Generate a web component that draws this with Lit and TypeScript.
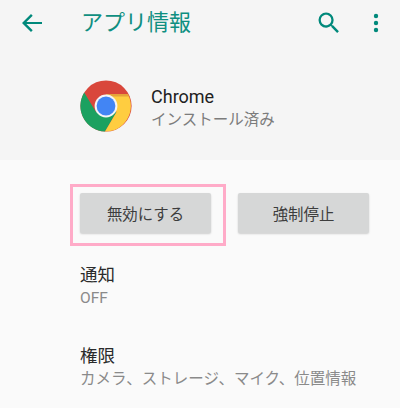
import { LitElement, html, css } from "lit";
import { customElement } from "lit/decorators.js";

@customElement("app-root")
export class AppRoot extends LitElement {
  static styles = css`
    :host { display: block; width: 400px; height: 408px; overflow: hidden; background: #fafafa;
      font-family: Roboto, "Noto Sans CJK JP", sans-serif; }
    .top { background: #f5f5f5; height: 160px; box-sizing: border-box; }
    .bar { height: 46px; display: flex; align-items: center; }
    .back { width: 24px; height: 24px; margin-left: 20px; }
    .title { margin-left: 37px; font-size: 22px; color: #0f8f81; line-height: 46px; flex: 1; white-space: nowrap; }
    .search { width: 28px; height: 28px; margin-right: 21px; }
    .more { width: 24px; height: 24px; margin-right: 12px; }
    .app { display: flex; align-items: flex-start; padding: 34px 0 0 80px; }
    .logo { width: 52px; height: 52px; }
    .names { margin-left: 19px; padding-top: 5px; }
    .name { font-size: 18px; line-height: 24px; color: #212121; }
    .status { font-size: 15.5px; line-height: 23px; color: #7c7c7c; white-space: nowrap; }
    .actions { display: flex; align-items: flex-start; padding: 24px 0 0 70px; }
    .hl { border: 3px solid #ffabc8; padding: 6px 12px 10px 7px; }
    .btn { width: 131px; height: 40px; border-radius: 2px; background: #d6d7d7; color: #3d3d3d;
      box-shadow: 0 1px 2px rgba(0,0,0,.18); font-size: 15.4px; display: flex; align-items: center; justify-content: center; white-space: nowrap; }
    .second { margin: 9px 0 0 12px; }
    .rows { padding-left: 80px; }
    .row { white-space: nowrap; }
    .row-title { font-size: 17.5px; line-height: 24px; color: #2b2b2b; }
    .row-sub { font-size: 15.5px; line-height: 22px; color: #8a8a8a; }
    .n { margin-top: 17px; }
    .p { margin-top: 35px; }
  `;

  render() {
    return html`
      <div class="top">
        <div class="bar">
          <svg class="back" viewBox="0 0 24 24"><path fill="#00897b" d="M22 11H6.4l6.3-6.3L11 3 2 12l9 9 1.7-1.7L6.4 13H22z"/></svg>
          <div class="title">アプリ情報</div>
          <svg class="search" viewBox="0 0 24 24"><path fill="#00897b" d="M15.5 14h-.79l-.28-.27A6.47 6.47 0 0 0 16 9.5 6.5 6.5 0 1 0 9.5 16c1.61 0 3.09-.59 4.23-1.57l.27.28v.79l5 4.99L20.49 19l-4.99-5zm-6 0C7.01 14 5 11.99 5 9.5S7.01 5 9.5 5 14 7.01 14 9.5 11.99 14 9.5 14z"/></svg>
          <svg class="more" viewBox="0 0 24 24"><g fill="#00897b"><circle cx="12" cy="5" r="2.2"/><circle cx="12" cy="12" r="2.2"/><circle cx="12" cy="19" r="2.2"/></g></svg>
        </div>
        <div class="app">
          <svg class="logo" viewBox="0 0 52 52">
            <circle cx="26" cy="26" r="25.6" fill="#d9473b"/>
            <path fill="#1ba160" d="M4.2 12.6A25.6 25.6 0 0 0 25 51.6L36.5 32 26 26 16 32z"/>
            <path fill="#ffcd40" d="M26 14H47.9A25.6 25.6 0 0 1 25 51.6L36.5 32z"/>
            <path fill="#b5562f" opacity=".35" d="M26 14H47.9l1.2 2.5H28z"/>
            <circle cx="26" cy="26" r="11.4" fill="#f5f5f5"/>
            <circle cx="26" cy="26" r="9.4" fill="#4285f4"/>
          </svg>
          <div class="names">
            <div class="name">Chrome</div>
            <div class="status">インストール済み</div>
          </div>
        </div>
      </div>
      <div class="actions">
        <div class="hl"><div class="btn">無効にする</div></div>
        <div class="btn second">強制停止</div>
      </div>
      <div class="rows">
        <div class="row n">
          <div class="row-title">通知</div>
          <div class="row-sub">OFF</div>
        </div>
        <div class="row p">
          <div class="row-title">権限</div>
          <div class="row-sub">カメラ、ストレージ、マイク、位置情報</div>
        </div>
      </div>
    `;
  }
}
